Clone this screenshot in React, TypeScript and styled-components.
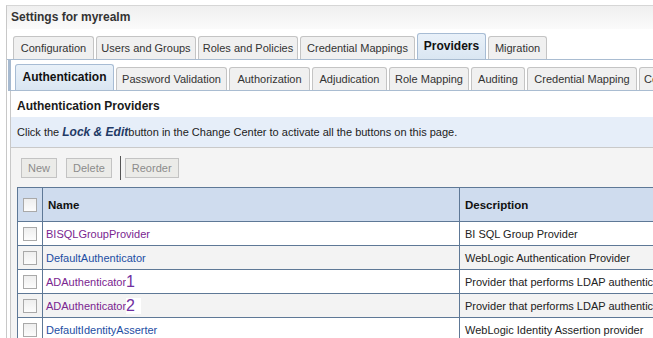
import React from 'react';
import styled, { createGlobalStyle } from 'styled-components';

const GlobalStyle = createGlobalStyle`
  html, body {
    margin: 0;
    padding: 0;
    background: #fff;
    overflow: hidden;
  }
  body {
    font-family: "Liberation Sans", Arial, sans-serif;
    font-size: 11px;
    color: #222;
  }
`;

type Tab = { label: string; width: number; active?: boolean };

// tab widths follow the console's own sizing
const mainTabs: Tab[] = [
  { label: 'Configuration', width: 81 },
  { label: 'Users and Groups', width: 100 },
  { label: 'Roles and Policies', width: 100 },
  { label: 'Credential Mappings', width: 115 },
  { label: 'Providers', width: 69, active: true },
  { label: 'Migration', width: 59 },
];

const subTabs: Tab[] = [
  { label: 'Authentication', width: 99, active: true },
  { label: 'Password Validation', width: 111 },
  { label: 'Authorization', width: 81 },
  { label: 'Adjudication', width: 75 },
  { label: 'Role Mapping', width: 80 },
  { label: 'Auditing', width: 54 },
  { label: 'Credential Mapping', width: 110 },
  { label: 'Certification Path', width: 94 },
];

type Row = { name: string; suffix?: string; visited?: boolean; desc: string };

const rows: Row[] = [
  { name: 'BISQLGroupProvider', visited: true, desc: 'BI SQL Group Provider' },
  { name: 'DefaultAuthenticator', desc: 'WebLogic Authentication Provider' },
  { name: 'ADAuthenticator', suffix: '1', visited: true, desc: 'Provider that performs LDAP authentication' },
  { name: 'ADAuthenticator', suffix: '2', visited: true, desc: 'Provider that performs LDAP authentication' },
  { name: 'DefaultIdentityAsserter', desc: 'WebLogic Identity Assertion provider' },
];

const Viewport = styled.div`
  width: 653px;
  height: 338px;
  overflow: hidden;
`;

const Frame = styled.div`
  margin: 5px 0 0 6px;
  width: 700px;
  border-left: 1px solid #c8c8c8;
  border-top: 1px solid #d6d6d6;
`;

const TitleBar = styled.div`
  height: 23px;
  line-height: 23px;
  padding-left: 4px;
  font-size: 12px;
  font-weight: bold;
  color: #333;
  background: linear-gradient(#efefef, #fbfbfb);
`;

const TabRow = styled.div<{ $sub?: boolean }>`
  display: flex;
  align-items: flex-end;
  gap: 2px;
  height: 30px;
  padding-left: ${p => (p.$sub ? 4 : 6)}px;
  border-bottom: 1px solid #a9bcd1;
  white-space: nowrap;
`;

const TabItem = styled.div<{ $active?: boolean }>`
  flex: none;
  height: ${p => (p.$active ? 26 : 23)}px;
  line-height: ${p => (p.$active ? 25 : 22)}px;
  box-sizing: border-box;
  text-align: center;
  border: 1px solid ${p => (p.$active ? '#a7bcd4' : '#c4c4c4')};
  border-bottom: none;
  border-radius: 3px 3px 0 0;
  background: ${p => (p.$active ? 'linear-gradient(#e9f1f9, #dae6f2)' : '#f0f0f0')};
  font-weight: ${p => (p.$active ? 'bold' : 'normal')};
  font-size: ${p => (p.$active ? 12 : 11)}px;
  color: ${p => (p.$active ? '#111' : '#333')};
  overflow: hidden;
`;

const SubPanel = styled.div`
  margin-left: 1px;
  border-left: 3px solid #a6b9cf;
`;

const Content = styled.div`
  margin-left: 3px;
  border-left: 1px solid #c8c8c8;
  padding-bottom: 40px;
`;

const Heading = styled.div`
  height: 26px;
  line-height: 31px;
  padding-left: 6px;
  font-size: 12px;
  font-weight: bold;
  color: #1a1a1a;
  background: #fff;
`;

const InfoBar = styled.div`
  height: 30px;
  line-height: 30px;
  padding-left: 6px;
  font-size: 11px;
  color: #222;
  background: #e6eef9;
  border-bottom: 1px solid #c9c9c9;
  white-space: nowrap;
`;

const LockEdit = styled.b`
  font-style: italic;
  color: #1f3a66;
  font-size: 12px;
`;

const Workarea = styled.div`
  background: #f4f4f4;
  padding: 8px 0 0 6px;
`;

const Toolbar = styled.div`
  display: flex;
  align-items: center;
  gap: 9px;
  padding-left: 4px;
  height: 24px;
`;

const ToolButton = styled.div`
  height: 20px;
  line-height: 18px;
  padding: 0 6px;
  box-sizing: border-box;
  border: 1px solid #c3c3c3;
  background: #ebebe8;
  color: #8b8b8b;
  font-size: 11px;
`;

const ToolDivider = styled.div`
  width: 1px;
  height: 24px;
  background: #555;
  margin: 0 -5px 0 -1px;
`;

const Table = styled.table`
  margin-top: 7px;
  border-collapse: collapse;
  width: 700px;
  background: #fff;
  border: 1px solid #5e7896;
  font-size: 11px;
`;

const HeadCell = styled.th<{ $w?: number }>`
  height: 33px;
  text-align: left;
  padding: 0 0 0 5px;
  background: #cfdcee;
  border-left: 1px solid #5e7896;
  font-weight: bold;
  font-size: 11.5px;
  color: #111;
  width: ${p => (p.$w ? `${p.$w}px` : 'auto')};
`;

const BodyRow = styled.tr<{ $alt?: boolean }>`
  background: ${p => (p.$alt ? '#f3f3f3' : '#fff')};
  border-top: 1px solid #5e7896;
`;

const Cell = styled.td<{ $pad?: number }>`
  height: 23px;
  padding: 0 0 0 ${p => p.$pad ?? 5}px;
  border-left: 1px solid #5e7896;
  white-space: nowrap;
  color: #222;
`;

const Check = styled.div`
  width: 14px;
  height: 14px;
  box-sizing: border-box;
  border: 1px solid #a9a9a9;
  background: linear-gradient(#eeeeee, #fcfcfc);
`;

const NameLink = styled.span<{ $visited?: boolean }>`
  color: ${p => (p.$visited ? '#7a2590' : '#1d4ea3')};
`;

const Marker = styled.span`
  display: inline-block;
  font-size: 16px;
  line-height: 16px;
  color: #7030a0;
  background: #fff;
  padding-right: 6px;
  vertical-align: -1px;
`;

export default function App() {
  return (
    <Viewport>
      <GlobalStyle />
      <Frame>
        <TitleBar>Settings for myrealm</TitleBar>
        <TabRow>
          {mainTabs.map(t => (
            <TabItem key={t.label} $active={t.active} style={{ width: t.width }}>{t.label}</TabItem>
          ))}
        </TabRow>
        <SubPanel>
          <TabRow $sub>
            {subTabs.map(t => (
              <TabItem key={t.label} $active={t.active} style={{ width: t.width }}>{t.label}</TabItem>
            ))}
          </TabRow>
        </SubPanel>
        <Content>
          <Heading>Authentication Providers</Heading>
          <InfoBar>
            Click the <LockEdit>Lock &amp; Edit</LockEdit>button in the Change Center to activate all the buttons on this page.
          </InfoBar>
          <Workarea>
            <Toolbar>
              <ToolButton>New</ToolButton>
              <ToolButton>Delete</ToolButton>
              <ToolDivider />
              <ToolButton>Reorder</ToolButton>
            </Toolbar>
            <Table>
              <thead>
                <tr>
                  <HeadCell $w={19}><Check /></HeadCell>
                  <HeadCell $w={411}>Name</HeadCell>
                  <HeadCell>Description</HeadCell>
                </tr>
              </thead>
              <tbody>
                {rows.map((r, i) => (
                  <BodyRow key={i} $alt={i % 2 === 1}>
                    <Cell><Check /></Cell>
                    <Cell $pad={3}>
                      <NameLink $visited={r.visited}>{r.name}</NameLink>
                      {r.suffix && <Marker>{r.suffix}</Marker>}
                    </Cell>
                    <Cell>{r.desc}</Cell>
                  </BodyRow>
                ))}
              </tbody>
            </Table>
          </Workarea>
        </Content>
      </Frame>
    </Viewport>
  );
}
